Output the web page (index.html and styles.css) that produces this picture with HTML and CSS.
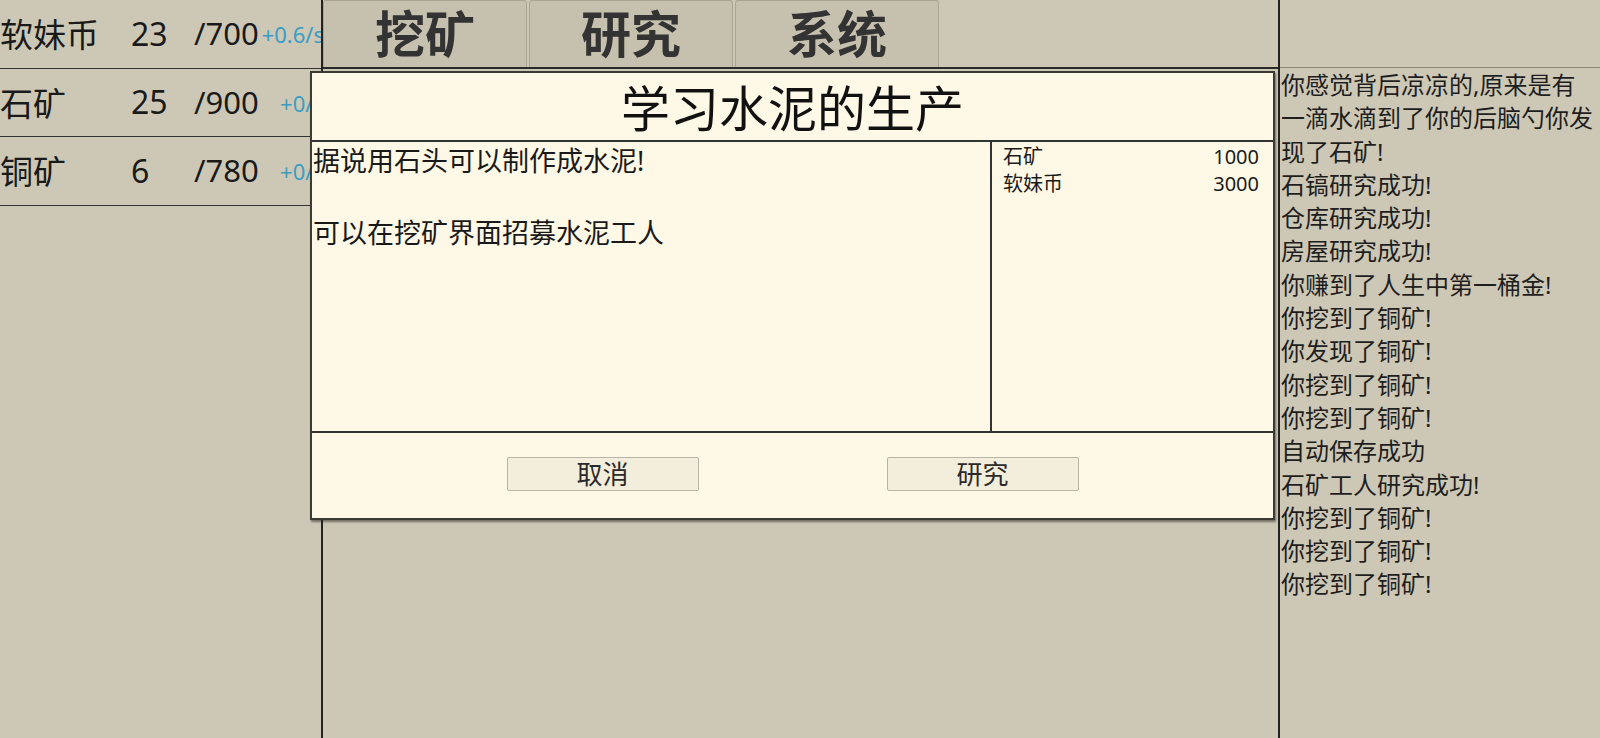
FILE: index.html
```html
<!DOCTYPE html>
<html lang="zh-CN">
<head>
  <meta charset="UTF-8">
  <meta name="viewport" content="width=device-width, initial-scale=1.0">
  <title>挖矿</title>
  <link rel="stylesheet" href="styles.css">
</head>
<body>
  <div class="game">
    <aside class="stats">
      <div class="stat-row"><span class="stat-name">软妹币</span><span class="stat-count">23</span><span class="stat-max">/700</span><span class="stat-rate">+0.6/s</span></div>
      <div class="stat-row"><span class="stat-name">石矿</span><span class="stat-count">25</span><span class="stat-max">/900</span><span class="stat-rate">+0/s</span></div>
      <div class="stat-row"><span class="stat-name">铜矿</span><span class="stat-count">6</span><span class="stat-max">/780</span><span class="stat-rate">+0/s</span></div>
    </aside>

    <main class="board">
      <nav class="tabs">
        <button class="tab">挖矿</button>
        <button class="tab">研究</button>
        <button class="tab">系统</button>
      </nav>
      <div class="board-body"></div>
    </main>

    <aside class="log">
      <div class="log-head"></div>
      <div class="log-list">
        <p>你感觉背后凉凉的,原来是有一滴水滴到了你的后脑勺你发现了石矿!</p>
        <p>石镐研究成功!</p>
        <p>仓库研究成功!</p>
        <p>房屋研究成功!</p>
        <p>你赚到了人生中第一桶金!</p>
        <p>你挖到了铜矿!</p>
        <p>你发现了铜矿!</p>
        <p>你挖到了铜矿!</p>
        <p>你挖到了铜矿!</p>
        <p>自动保存成功</p>
        <p>石矿工人研究成功!</p>
        <p>你挖到了铜矿!</p>
        <p>你挖到了铜矿!</p>
        <p>你挖到了铜矿!</p>
      </div>
    </aside>
  </div>

  <div class="modal">
    <div class="modal-title">学习水泥的生产</div>
    <div class="modal-body">
      <div class="modal-desc">据说用石头可以制作成水泥!<br><br>可以在挖矿界面招募水泥工人</div>
      <div class="modal-cost">
        <div class="cost-row"><span>石矿</span><span>1000</span></div>
        <div class="cost-row"><span>软妹币</span><span>3000</span></div>
      </div>
    </div>
    <div class="modal-foot">
      <button class="btn">取消</button>
      <button class="btn">研究</button>
    </div>
  </div>
</body>
</html>
```

FILE: styles.css
```css
* { box-sizing: border-box; }
html, body { margin: 0; padding: 0; height: 100%; }
body { font-family: "Noto Sans", "Noto Sans CJK SC", sans-serif; background: #cdc8b6; color: #1a1a1a; overflow: hidden; }

.game { display: flex; height: 738px; }

/* resources */
.stats { width: 321px; flex-shrink: 0; overflow: hidden; }
.stat-row { display: flex; align-items: center; width: 324px; height: 68.5px; border-bottom: 1px solid #333; font-size: 32px; white-space: nowrap; padding-bottom: 1px; }
.stat-name { width: 131px; font-size: 33px; }
.stat-count { width: 63px; }
.stat-max { width: 64px; font-size: 31px; }
.stat-rate { flex: 1; text-align: right; font-size: 22px; color: #3a9dc4; padding-top: 2px; }

/* centre */
.board { flex: 1; border-left: 2px solid #222; border-right: 2px solid #222; display: flex; flex-direction: column; }
.tabs { display: flex; gap: 2px; height: 69px; border-bottom: 2px solid #2a2a2a; }
.tab { width: 204px; height: 67px; margin: 0; padding: 0; background: #c6c1ae; border: 1px solid #a9a592; border-bottom: none; border-radius: 3px 3px 0 0; font-family: inherit; font-size: 50px; font-weight: bold; color: #333; line-height: 64px; }
.board-body { flex: 1; }

/* log */
.log { width: 320px; flex-shrink: 0; }
.log-head { height: 68px; border-bottom: 1px solid #8a8778; }
.log-list { width: 317px; padding: 0 0 0 1px; font-size: 24px; line-height: 33.3px; color: #1e1e1e; }
.log-list p { margin: 0; }

/* dialog */
.modal { position: absolute; left: 310px; top: 71px; width: 965px; height: 449px; background: #fef9e6; border: 2px solid #3b3a33; box-shadow: 1px 2px 2px rgba(40, 38, 30, 0.55); display: flex; flex-direction: column; }
.modal-title { height: 69px; border-bottom: 2px solid #333; text-align: center; font-size: 49px; line-height: 71px; color: #111; }
.modal-body { display: flex; height: 291px; border-bottom: 2px solid #333; }
.modal-desc { width: 680px; border-right: 2px solid #333; padding: 1px 0 0 1px; font-size: 27px; line-height: 36px; }
.modal-cost { flex: 1; padding: 1px 14px 0 11px; font-size: 20px; line-height: 27px; }
.cost-row { display: flex; justify-content: space-between; }
.modal-foot { flex: 1; display: flex; justify-content: center; align-items: center; gap: 188px; padding-bottom: 4px; }
.btn { width: 192px; height: 34px; padding: 0; background: #f3eedb; border: 1px solid #b9b5a6; border-radius: 2px; font-family: inherit; font-size: 26px; line-height: 32px; color: #2a2a2a; }
```
